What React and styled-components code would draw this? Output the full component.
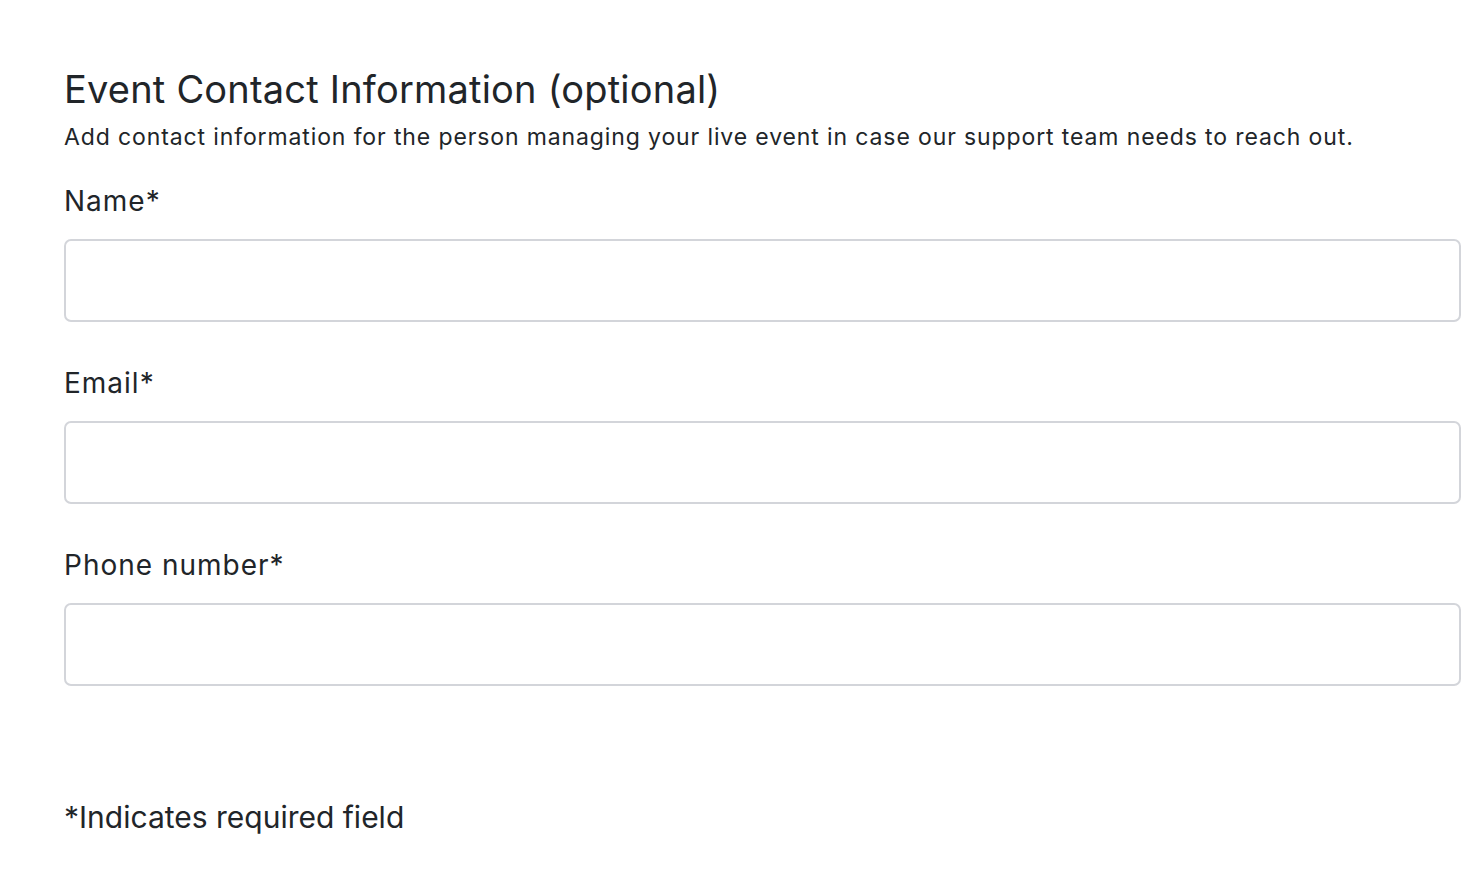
import React from "react";
import styled, { createGlobalStyle } from "styled-components";

const GlobalStyle = createGlobalStyle`
  body {
    margin: 0;
    background: #ffffff;
    font-family: Inter, "Noto Sans", "Liberation Sans", sans-serif;
    color: #212529;
  }
`;

const Page = styled.div`
  padding: 66px 18px 0 64px;
`;

const Title = styled.h2`
  margin: 0;
  font-size: 38px;
  font-weight: 400;
  line-height: 46px;
  letter-spacing: 0.2px;
`;

const Lead = styled.p`
  margin: 9px 0 0;
  font-size: 23px;
  line-height: 32px;
  letter-spacing: 0.88px;
`;

const Field = styled.div`
  display: flex;
  flex-direction: column;
  margin-top: ${(p) => p.$top}px;
`;

const Label = styled.label`
  font-size: 28px;
  line-height: 36px;
  letter-spacing: 1px;
  margin-bottom: 20px;
`;

const Input = styled.input`
  box-sizing: border-box;
  height: 83px;
  width: 100%;
  border: 2px solid #d3d5da;
  border-radius: 7px;
  background: #fff;
  font: inherit;
  font-size: 24px;
  padding: 0 18px;
  outline: none;
`;

const Note = styled.p`
  margin: 113px 0 0;
  font-size: 30px;
  line-height: 36px;
`;

const fields = [
  { id: "name", label: "Name*", top: 30 },
  { id: "email", label: "Email*", top: 43 },
  { id: "phone", label: "Phone number*", top: 43 },
];

export default function App() {
  return (
    <>
      <GlobalStyle />
      <Page>
        <Title>Event Contact Information (optional)</Title>
        <Lead>
          Add contact information for the person managing your live event in
          case our support team needs to reach out.
        </Lead>
        {fields.map((f) => (
          <Field key={f.id} $top={f.top}>
            <Label htmlFor={f.id}>{f.label}</Label>
            <Input id={f.id} type="text" />
          </Field>
        ))}
        <Note>*Indicates required field</Note>
      </Page>
    </>
  );
}
